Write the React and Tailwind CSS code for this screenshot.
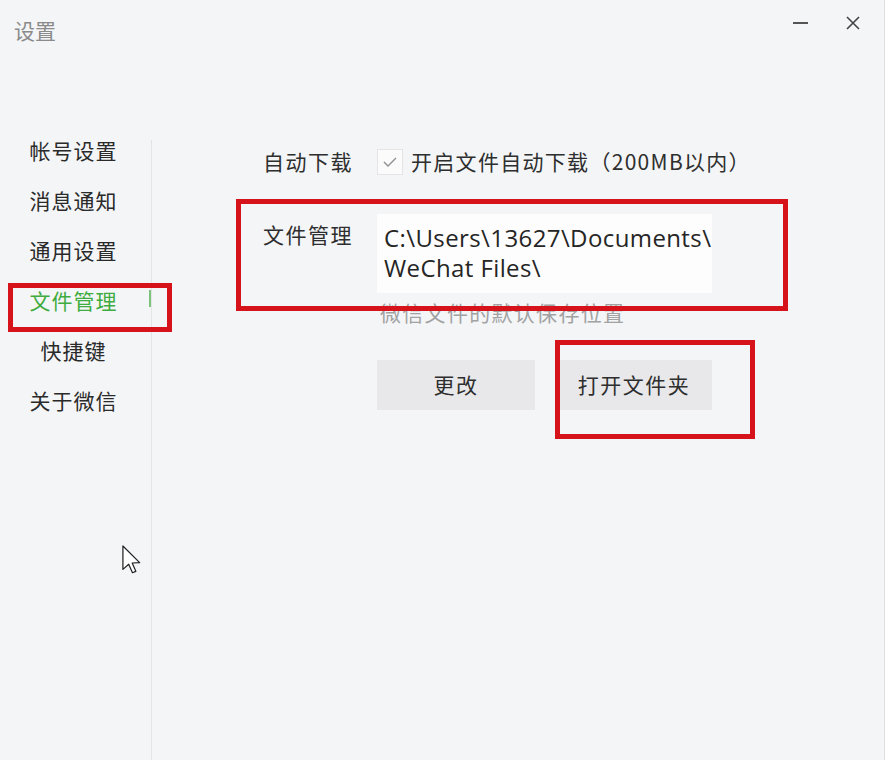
import React from "react";

const navItems = ["帐号设置", "消息通知", "通用设置", "文件管理", "快捷键", "关于微信"];

const cjk = { fontFamily: '"Noto Sans CJK SC", "Noto Sans", sans-serif' };
const latin = { fontFamily: '"Open Sans", "Noto Sans CJK SC", sans-serif' };

const Cursor = () => (
  <svg width="19" height="29" viewBox="0 0 12.5 19" className="absolute left-[122px] top-[545px]">
    <path
      d="M0.6 0.6 V16 L4.4 12.6 L6.9 18.2 L9.1 17.3 L6.7 11.8 L11.6 11.6 Z"
      fill="#ffffff"
      stroke="#222222"
      strokeWidth="0.8"
      strokeLinejoin="round"
    />
  </svg>
);

const App = () => {
  return (
    <div className="relative flex h-[760px] w-[888px] overflow-hidden bg-white" style={cjk}>
      <div className="flex h-full w-[885px] flex-col border-r border-[#dedede] bg-[#f4f5f7]">
        {/* title bar */}
        <div className="flex h-[126px] items-start justify-between">
          <span className="ml-[14px] mt-[16px] text-[21px] leading-[28px] text-[#8a8a8a]">设置</span>
          <div className="mr-[24px] mt-[16px] flex items-center gap-[38px]">
            <span className="block h-[2px] w-[15px] bg-[#555]" />
            <svg width="14" height="14" viewBox="0 0 14 14">
              <path d="M1 1 L13 13 M13 1 L1 13" stroke="#444" strokeWidth="1.6" />
            </svg>
          </div>
        </div>

        <div className="flex flex-1">
          {/* sidebar */}
          <div className="flex w-[151px] flex-col">
            {navItems.map((item) => {
              const active = item === "文件管理";
              return (
                <div key={item} className="relative flex h-[50px] items-center justify-center">
                  <span
                    className={`ml-[-4px] text-[21px] tracking-[1px] ${active ? "text-[#3fac3f]" : "text-[#2a2a2a]"}`}
                  >
                    {item}
                  </span>
                  {active && <span className="absolute right-[0px] top-[14px] h-[17px] w-[2px] bg-[#7dc27b]" />}
                </div>
              );
            })}
          </div>
          <div className="mt-[14px] w-px bg-[#e4e4e6]" />

          {/* content */}
          <div className="flex flex-col pl-[111px] pt-[20px]">
            <div className="flex items-center">
              <span className="w-[114px] text-[21px] tracking-[1.5px] text-[#2e2e2e]">自动下载</span>
              <span className="grid h-[26px] w-[26px] place-items-center border border-[#e4e4e6] bg-[#fbfbfb]">
                <svg width="14" height="10" viewBox="0 0 14 10">
                  <path d="M1 5 L5 9 L13 1" fill="none" stroke="#8f8f8f" strokeWidth="1.4" />
                </svg>
              </span>
              <span className="ml-[8px] text-[21px] tracking-[1.3px] text-[#2e2e2e]">
                开启文件自动下载（200MB以内）
              </span>
            </div>

            <div className="mt-[36px] flex items-start">
              <span className="mt-[5px] w-[114px] text-[21px] tracking-[1.5px] text-[#2e2e2e]">文件管理</span>
              <div className="flex flex-col">
                <div
                  className="h-[79px] w-[335px] bg-[#fdfdfd] px-[7px] pt-[9px] text-[24px] leading-[30px] tracking-[0.4px] text-[#252525]"
                  style={latin}
                >
                  C:\Users\13627\Documents\
                  <br />
                  WeChat Files\
                </div>
                <span className="mt-[8px] pl-[3px] text-[21px] leading-[22px] tracking-[1.3px] text-[#a2a2a2]">
                  微信文件的默认保存位置
                </span>
              </div>
            </div>

            <div className="ml-[114px] mt-[37px] flex gap-[21px]">
              <button
                type="button"
                className="h-[50px] w-[158px] bg-[#e8e8ea] text-[21px] tracking-[1.5px] text-[#2e2e2e]"
              >
                更改
              </button>
              <button
                type="button"
                className="h-[50px] w-[156px] bg-[#e8e8ea] text-[21px] tracking-[1.5px] text-[#2e2e2e]"
              >
                打开文件夹
              </button>
            </div>
          </div>
        </div>
      </div>

      {/* annotation boxes */}
      <div className="absolute left-[8px] top-[283px] h-[49px] w-[164px] border-[5px] border-[#d6131b]" />
      <div className="absolute left-[236px] top-[199px] h-[112px] w-[552px] border-[5px] border-[#d6131b]" />
      <div className="absolute left-[555px] top-[340px] h-[99px] w-[200px] border-[5px] border-[#d6131b]" />

      <Cursor />
    </div>
  );
};

export default App;
